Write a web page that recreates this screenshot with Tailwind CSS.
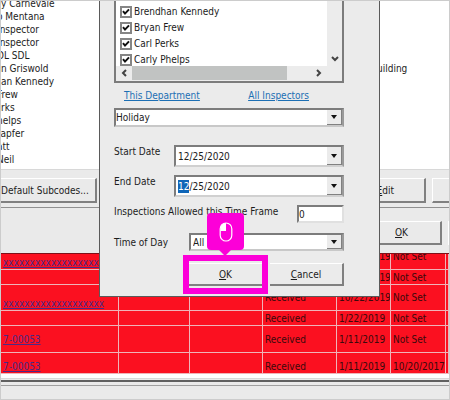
<!DOCTYPE html>
<html lang="en">
<head>
<meta charset="utf-8">
<title>Inspector Schedule</title>
<script src="https://cdn.jsdelivr.net/npm/@tailwindcss/browser@4"></script>
</head>
<body class="relative h-screen overflow-hidden border border-[#cccccc] bg-[#eaeaea] font-['DejaVu_Sans_Condensed','DejaVu_Sans',sans-serif] text-[10px] leading-[13px] text-[#1c1c1c]">

<!-- Background window -->
<main class="flex h-full flex-col">
  <section class="flex h-[168px] shrink-0 overflow-hidden bg-white">
    <ul class="-mt-1 w-[376px] shrink-0 whitespace-nowrap">
      <li>y Carnevale</li>
      <li class="-ml-1">o Mentana</li>
      <li class="-ml-1">Inspector</li>
      <li class="-ml-1">Inspector</li>
      <li class="-ml-1">DL SDL</li>
      <li>n Griswold</li>
      <li>an Kennedy</li>
      <li class="-ml-1">Frew</li>
      <li>rks</li>
      <li class="-ml-1">helps</li>
      <li class="-ml-1">tapfer</li>
      <li class="-ml-1">att</li>
      <li class="-ml-1">Neil</li>
    </ul>
    <p class="mt-[61px]">uilding</p>
  </section>

  <div class="flex h-[38px] shrink-0 items-center justify-between border-t border-[#d8d8d8] pt-1">
    <button class="h-[25px] w-24 border-t border-r-2 border-b-2 border-[#808080] border-t-white pr-1 text-right whitespace-nowrap"><span class="pr-1">Default Subcodes...</span></button>
    <div class="flex gap-1.5">
      <button class="h-[25px] w-[78px] border-t border-r-2 border-b-2 border-[#808080] border-t-white pr-[30px] text-right"><u>E</u>dit</button>
      <button aria-label="More" class="h-[25px] w-[17px] border-t border-b-2 border-l border-[#808080] border-t-white border-l-white"></button>
    </div>
  </div>

  <div class="flex h-[46px] shrink-0 items-center justify-end gap-1.5 border-t border-[#909090] pt-1">
    <button class="h-[24px] w-[79px] border-t border-r-2 border-b-2 border-[#808080] border-t-white"><u>O</u>K</button>
    <button aria-label="Next" class="h-[24px] w-[1px] border-l border-white"></button>
  </div>

  <section class="h-[121px] shrink-0 overflow-hidden border-t border-[#801018] bg-[#fb1020] text-[#3a0a0c]">
    <table class="-mt-2.5 w-full table-fixed border-separate border-spacing-0 whitespace-nowrap [&_a]:text-[#4b2a86] [&_a]:underline [&_td]:overflow-hidden [&_td]:border-r [&_td]:border-b [&_td]:border-[#efb4b8] [&_td]:p-0 [&_td]:pl-0.5 [&_td]:leading-[13px]">
      <colgroup><col class="w-[118px]"><col class="w-[71px]"><col class="w-[73px]"><col class="w-[74px]"><col class="w-[54px]"><col class="w-[55px]"><col></colgroup>
      <tbody>
        <tr class="h-[26px]"><td class="align-bottom"><a href="#">xxxxxxxxxxxxxxxxxxx</a></td><td></td><td></td><td>Received</td><td>12/22/2019</td><td>Not Set</td><td>C</td></tr>
        <tr class="h-[15px]"><td></td><td></td><td></td><td>Received</td><td>10/22/2019</td><td>Not Set</td><td>A</td></tr>
        <tr class="h-[26px]"><td class="align-bottom"><a href="#">xxxxxxxxxxxxxxxxxxx</a></td><td></td><td></td><td>Received</td><td>10/22/2019</td><td>Not Set</td><td>C</td></tr>
        <tr class="h-[15px]"><td></td><td></td><td></td><td>Received</td><td>1/22/2019</td><td>Not Set</td><td></td></tr>
        <tr class="h-[27px]"><td><a href="#">7-00053</a></td><td></td><td></td><td>Received</td><td>1/11/2019</td><td>Not Set</td><td></td></tr>
        <tr class="h-[21px]"><td class="align-bottom"><a href="#">7-00053</a></td><td></td><td></td><td class="align-bottom">Received</td><td class="align-bottom">1/11/2019</td><td class="align-bottom">10/20/2017</td><td class="align-bottom">C</td></tr>
      </tbody>
    </table>
  </section>
  <div class="h-1 shrink-0 bg-white"></div>
  <footer class="flex-1 border-t border-[#d8d8d8] pt-px">
    <div class="h-1.5 border-t-2 border-b border-t-[#606060] border-b-[#a0a0a0]"></div>
  </footer>
</main>

<!-- Dialog -->
<form role="dialog" aria-label="Time off" class="absolute top-0 left-[98px] w-[281px] border-x border-b border-[#5a5a5a] bg-[#ebebeb] pr-[35px] pb-2.5 pl-3.5" onsubmit="return false">
  <div class="flex h-[82px] flex-col border-x-2 border-b-2 border-[#7c7c7c] bg-[#ececec]">
    <div class="flex h-[65px]">
      <div class="flex flex-1 flex-col gap-[3px] bg-white pt-1 pl-1">
        <label class="flex items-center gap-0.5"><span class="grid place-items-center"><input type="checkbox" checked class="h-3 w-3 appearance-none border-2 border-[#858585] bg-white [grid-area:1/1]"><svg viewBox="0 0 8 8" class="pointer-events-none h-2 w-2 [grid-area:1/1]" fill="none" stroke="#111" stroke-width="2"><path d="M1 3.2 3 5.6 7 1.4"/></svg></span>Brendhan Kennedy</label>
        <label class="flex items-center gap-0.5"><span class="grid place-items-center"><input type="checkbox" checked class="h-3 w-3 appearance-none border-2 border-[#858585] bg-white [grid-area:1/1]"><svg viewBox="0 0 8 8" class="pointer-events-none h-2 w-2 [grid-area:1/1]" fill="none" stroke="#111" stroke-width="2"><path d="M1 3.2 3 5.6 7 1.4"/></svg></span>Bryan Frew</label>
        <label class="flex items-center gap-0.5"><span class="grid place-items-center"><input type="checkbox" checked class="h-3 w-3 appearance-none border-2 border-[#858585] bg-white [grid-area:1/1]"><svg viewBox="0 0 8 8" class="pointer-events-none h-2 w-2 [grid-area:1/1]" fill="none" stroke="#111" stroke-width="2"><path d="M1 3.2 3 5.6 7 1.4"/></svg></span>Carl Perks</label>
        <label class="flex items-center gap-0.5"><span class="grid place-items-center"><input type="checkbox" checked class="h-3 w-3 appearance-none border-2 border-[#858585] bg-white [grid-area:1/1]"><svg viewBox="0 0 8 8" class="pointer-events-none h-2 w-2 [grid-area:1/1]" fill="none" stroke="#111" stroke-width="2"><path d="M1 3.2 3 5.6 7 1.4"/></svg></span>Carly Phelps</label>
      </div>
      <div class="flex w-[15px] items-end justify-center pb-1">
        <svg viewBox="0 0 8 6" class="h-1.5 w-2" fill="none" stroke="#444" stroke-width="2"><path d="M1 1 4 4 7 1"/></svg>
      </div>
    </div>
    <div class="flex h-3.5 items-center">
      <span class="flex w-4 justify-center"><svg viewBox="0 0 6 8" class="h-2 w-1.5" fill="none" stroke="#444" stroke-width="2"><path d="M5 1 2 4 5 7"/></svg></span>
      <span class="h-full w-[155px] bg-[#c1c3c2]"></span>
      <span class="ml-auto pr-5"><svg viewBox="0 0 6 8" class="h-2 w-1.5" fill="none" stroke="#444" stroke-width="2"><path d="M1 1 4 4 1 7"/></svg></span>
    </div>
  </div>

  <div class="mt-1.5 flex justify-between pr-[35px] pl-2.5 text-[#1c6fb4] underline">
    <a href="#">This Department</a>
    <a href="#">All Inspectors</a>
  </div>

  <div class="mt-1.5 flex h-[19px] border-2 border-[#7c7c7c] border-r-[#9a9a9a] border-b-[#c8c8c8] bg-white">
    <select aria-label="Reason" class="min-w-0 flex-1 appearance-none outline-none"><option>Holiday</option></select>
    <span class="flex w-[15px] items-center justify-center border-r border-b border-[#808080] bg-[#ebebeb]"><svg viewBox="0 0 6 4" class="h-1 w-1.5"><path d="M0 0h6L3 4z" fill="#111"/></svg></span>
  </div>

  <div class="mt-[18px] flex items-start">
    <label for="start" class="w-[60px] whitespace-nowrap">Start Date</label>
    <div class="flex h-[22px] min-w-0 flex-1 border-2 border-[#7c7c7c] border-r-[#9a9a9a] border-b-[#d0d0d0] bg-white">
      <input id="start" value="12/25/2020" class="min-w-0 flex-1 pl-0.5 outline-none">
      <button type="button" aria-label="Open start date" class="flex w-[15px] items-center justify-center border-r border-b border-[#808080] bg-[#ebebeb]"><svg viewBox="0 0 6 4" class="h-1 w-1.5"><path d="M0 0h6L3 4z" fill="#111"/></svg></button>
    </div>
  </div>
  <div class="mt-2 flex items-start">
    <label for="end" class="w-[60px] whitespace-nowrap">End Date</label>
    <div class="flex h-[22px] min-w-0 flex-1 border-2 border-[#7c7c7c] border-r-[#9a9a9a] border-b-[#d0d0d0] bg-white">
      <input id="end" value="12/25/2020" class="min-w-0 flex-1 pl-0.5 outline-none selection:bg-[#0f66b8] selection:text-white">
      <button type="button" aria-label="Open end date" class="flex w-[15px] items-center justify-center border-r border-b border-[#808080] bg-[#ebebeb]"><svg viewBox="0 0 6 4" class="h-1 w-1.5"><path d="M0 0h6L3 4z" fill="#111"/></svg></button>
    </div>
  </div>
  <div class="mt-2 flex items-start justify-between">
    <label for="count" class="whitespace-nowrap">Inspections Allowed this Time Frame</label>
    <input id="count" value="0" class="h-[18px] w-[47px] border-2 border-[#7c7c7c] border-r-[#e0e0e0] border-b-[#e0e0e0] bg-white outline-none">
  </div>
  <div class="mt-2.5 flex items-center">
    <label for="day" class="w-[75px] whitespace-nowrap">Time of Day</label>
    <div class="flex h-[18px] min-w-0 flex-1 border-2 border-[#7c7c7c] border-r-[#9a9a9a] border-b-[#c8c8c8] bg-white">
      <select id="day" class="min-w-0 flex-1 appearance-none pl-0.5 outline-none"><option>All Day</option></select>
      <span class="flex w-[15px] items-center justify-center border-r border-b border-[#808080] bg-[#ebebeb]"><svg viewBox="0 0 6 4" class="h-1 w-1.5"><path d="M0 0h6L3 4z" fill="#111"/></svg></span>
    </div>
  </div>
  <div class="mt-3 flex justify-end gap-2">
    <div class="relative">
      <button class="h-[23px] w-[73px] border-t border-b-2 border-t-white border-b-[#808080] bg-[#ebebeb]"><u>O</u>K</button>
      <span class="pointer-events-none absolute -inset-x-1.5 -inset-y-2 border-[6px] border-[#fc00d8]"></span>
      <!-- Click marker above the button -->
      <div class="absolute bottom-9 left-[18px] flex h-[37px] w-[37px] items-center justify-center rounded bg-[#fc00d8]">
        <svg viewBox="0 0 14 20" class="h-5 w-3.5" fill="none" stroke="#fff" stroke-width="1.2"><path d="M7 2v7H1.5V7A5.5 5.5 0 0 1 7 1z" fill="#fff" stroke="none"/><rect x="1.2" y="1" width="11.6" height="18" rx="5.8"/></svg>
        <svg viewBox="0 0 12 6" class="absolute top-full left-3 h-1.5 w-3"><path d="M0 0h12L6 6z" fill="#fc00d8"/></svg>
      </div>
    </div>
    <button type="button" class="h-[23px] w-[74px] border-t border-r-2 border-b-2 border-[#808080] border-t-white"><u>C</u>ancel</button>
  </div>
</form>

<script>
  const end = document.getElementById('end');
  end.focus();
  end.setSelectionRange(0, 2);
</script>
</body>
</html>
